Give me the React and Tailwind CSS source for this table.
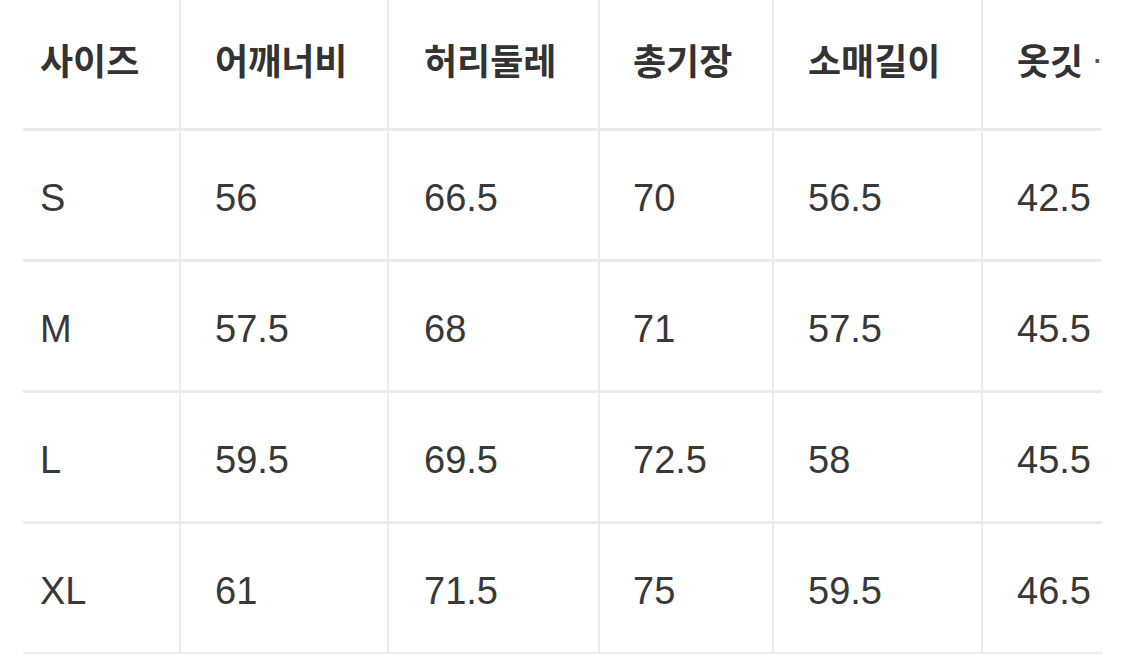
export default function App() {
  const cols = [
    "w-[158px] pl-[17px]",
    "w-[208px] pl-[34px]",
    "w-[211px] pl-[35px]",
    "w-[174px] pl-[33px]",
    "w-[209px] pl-[34px]",
    "flex-1 pl-[34px]",
  ];
  const header = ["사이즈", "어깨너비", "허리둘레", "총기장", "소매길이"];
  const rows = [
    ["S", "56", "66.5", "70", "56.5", "42.5"],
    ["M", "57.5", "68", "71", "57.5", "45.5"],
    ["L", "59.5", "69.5", "72.5", "58", "45.5"],
    ["XL", "61", "71.5", "75", "59.5", "46.5"],
  ];
  const kr = { fontFamily: '"Noto Sans CJK KR", "Noto Sans", sans-serif' };
  return (
    <div className="w-[1125px] h-[654px] bg-white overflow-hidden pl-[23px]">
      <div className="w-[1079px] overflow-hidden">
        <div className="flex h-[131px] border-b-[3px] border-[#ebebeb]">
          {header.map((h, i) => (
            <div
              key={i}
              className={`${cols[i]} shrink-0 flex items-center whitespace-nowrap border-r-2 border-[#ebebeb] text-[36px] font-semibold text-[#333333] pb-[10px]`}
              style={kr}
            >
              {h}
            </div>
          ))}
          <div
            className={`${cols[5]} flex items-center whitespace-nowrap text-[36px] font-semibold text-[#333333] pb-[10px]`}
            style={kr}
          >
            <span>옷깃</span>
            <span
              className="ml-[8px] text-[36px] font-normal text-[#555555]"
              style={{ fontFamily: '"Liberation Sans", Arial, sans-serif' }}
            >
              ·
            </span>
          </div>
        </div>
        {rows.map((r, ri) => (
          <div key={ri} className="flex h-[131px] border-b-[3px] border-[#ebebeb]">
            {r.map((c, i) => (
              <div
                key={i}
                className={`${cols[i]} shrink-0 flex items-center whitespace-nowrap ${i < 5 ? "border-r-2 border-[#ebebeb]" : ""} text-[38px] text-[#383838] pt-[6px]`}
                style={{ fontFamily: '"Liberation Sans", Arial, sans-serif' }}
              >
                {c}
              </div>
            ))}
          </div>
        ))}
      </div>
    </div>
  );
}
